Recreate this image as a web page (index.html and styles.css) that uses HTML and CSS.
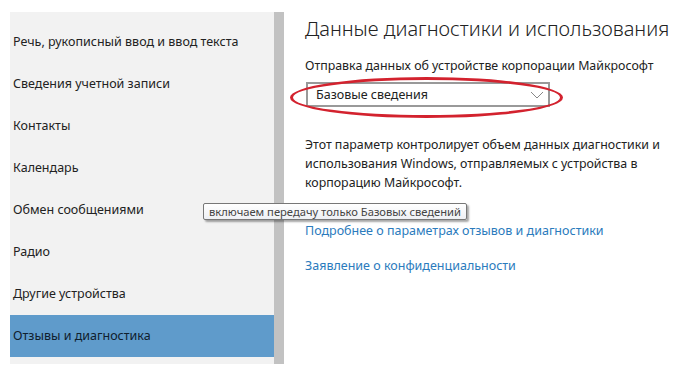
FILE: index.html
```html
<!DOCTYPE html>
<html lang="ru">
<head>
    <meta charset="UTF-8">
    <title>Отзывы и диагностика</title>
    <link rel="stylesheet" href="styles.css">
</head>
<body>
    <div class="page">
        <div class="sidebar">
            <div class="nav">
                <div class="nav-item">Речь, рукописный ввод и ввод текста</div>
                <div class="nav-item">Сведения учетной записи</div>
                <div class="nav-item">Контакты</div>
                <div class="nav-item">Календарь</div>
                <div class="nav-item">Обмен сообщениями</div>
                <div class="nav-item">Радио</div>
                <div class="nav-item">Другие устройства</div>
                <div class="nav-item active">Отзывы и диагностика</div>
            </div>
            <div class="scrollbar"></div>
        </div>
        <div class="content">
            <h1 class="title">Данные диагностики и использования</h1>
            <div class="label">Отправка данных об устройстве корпорации Майкрософт</div>
            <div class="combo">
                <div class="combo-box">
                    <span>Базовые сведения</span>
                    <svg class="chevron" width="14" height="8" viewBox="0 0 14 8">
                        <path d="M1 1 L7 7 L13 1" fill="none" stroke="#888" stroke-width="1"/>
                    </svg>
                </div>
                <div class="ring"></div>
            </div>
            <p class="desc">Этот параметр контролирует объем данных диагностики и использования Windows, отправляемых с устройства в корпорацию Майкрософт.</p>
            <a class="link first" href="#">Подробнее о параметрах отзывов и диагностики</a>
            <a class="link" href="#">Заявление о конфиденциальности</a>
        </div>
        <div class="tooltip">включаем передачу только Базовых сведений</div>
    </div>
</body>
</html>
```

FILE: styles.css
```css
body {
    margin: 0;
    background: #fff;
    font-family: 'Noto Sans', 'Open Sans', sans-serif;
    color: #1a1a1a;
}
.page {
    position: relative;
    display: flex;
    width: 682px;
    height: 373px;
    overflow: hidden;
}
.sidebar {
    display: flex;
    margin: 12px 0 0 10px;
    height: 352px;
}
.nav {
    width: 264px;
    background: #f2f2f2;
    padding-top: 9px;
    box-sizing: border-box;
}
.nav-item {
    height: 42px;
    line-height: 42px;
    padding-left: 3px;
    font-size: 12.5px;
    color: #222;
    white-space: nowrap;
}
.nav-item.active {
    background: #5f9bcb;
    color: #10202e;
}
.scrollbar {
    width: 10px;
    background: #c2c2c2;
}
.content {
    padding-left: 21px;
}
.title {
    margin: 15px 0 0;
    font-size: 20px;
    line-height: 28px;
    font-weight: 300;
    color: #222;
    white-space: nowrap;
}
.label {
    margin-top: 14px;
    font-size: 12.4px;
    line-height: 18px;
    color: #222;
    white-space: nowrap;
}
.combo {
    position: relative;
    margin: 7px 0 0 1px;
    width: 244px;
    height: 25px;
}
.combo-box {
    display: flex;
    justify-content: space-between;
    align-items: center;
    width: 244px;
    height: 25px;
    box-sizing: border-box;
    border: 2px solid #999999;
    background: #fff;
    padding: 0 4px 0 8px;
    font-size: 12.5px;
    color: #222;
}
.ring {
    position: absolute;
    left: -16px;
    top: -5px;
    width: 273px;
    height: 41px;
    box-sizing: border-box;
    border: 3px solid #d3222e;
    border-radius: 50%;
}
.desc {
    margin: 28px 0 0;
    width: 365px;
    font-size: 12.4px;
    line-height: 19px;
    color: #222;
}
.link {
    display: block;
    font-size: 12.5px;
    line-height: 18px;
    color: #2b7bbd;
    text-decoration: none;
    white-space: nowrap;
}
.link.first {
    margin-top: 30px;
}
.link + .link {
    margin-top: 17px;
}
.tooltip {
    position: absolute;
    left: 203px;
    top: 203px;
    padding: 0 5px;
    height: 15px;
    line-height: 15px;
    font-size: 11.2px;
    color: #444;
    background: linear-gradient(#fff, #eef0f4);
    border: 1px solid #777;
    border-radius: 2px;
    box-shadow: 2px 2px 2px rgba(0, 0, 0, 0.35);
    white-space: nowrap;
}
```
